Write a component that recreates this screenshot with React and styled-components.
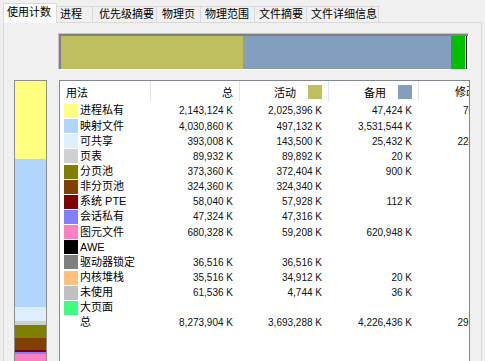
import React from "react"
import styled, { createGlobalStyle } from "styled-components"

const GlobalStyle = createGlobalStyle`
  html, body {
    margin: 0;
    padding: 0;
    background: #f0f0f0;
  }
  body {
    font-family: "Liberation Sans", "Noto Sans CJK SC", sans-serif;
    font-size: 11px;
    color: #000;
  }
`

const Window = styled.div`
  width: 485px;
  height: 361px;
  box-sizing: border-box;
  padding: 3px 3px 0;
  overflow: hidden;
`

const TabStrip = styled.div`
  display: flex;
  align-items: flex-end;
  height: 19px;
  position: relative;
  z-index: 1;
`

const Tab = styled.div`
  box-sizing: border-box;
  width: ${p => p.$w}px;
  height: ${p => (p.$active ? 20 : 16)}px;
  margin-left: ${p => (p.$first ? 0 : -1)}px;
  margin-bottom: ${p => (p.$active ? -1 : 0)}px;
  padding: ${p => (p.$active ? 2 : 1)}px 0 0 ${p => p.$pl}px;
  border: 1px solid #d9d9d9;
  border-bottom: none;
  background: ${p => (p.$active ? "#fbfbfb" : "#f0f0f0")};
  line-height: 13px;
  white-space: nowrap;
  position: relative;
  z-index: ${p => (p.$active ? 2 : 1)};
`

const Panel = styled.div`
  box-sizing: border-box;
  width: 479px;
  height: 400px;
  border: 1px solid #d9d9d9;
  background: #f0f0f0;
  padding-top: 10px;
`

const Sunken = styled.div`
  box-sizing: border-box;
  width: 411px;
  height: 37px;
  margin-left: 54px;
  border: 1px solid;
  border-color: #c4c4c4 #fdfdfd #fdfdfd #c4c4c4;
`

const Track = styled.div`
  display: flex;
  height: 100%;
  box-sizing: border-box;
  border-top: 2px solid #808080;
  border-left: 2px solid #808080;
`

const Fill = styled.div`
  flex: none;
  background: ${p => p.$color};
`

const Marker = styled.div`
  flex: none;
  width: 1px;
  margin-left: 1px;
  background: #000;
`

const Lower = styled.div`
  display: grid;
  grid-template-columns: 33px 411px;
  column-gap: 12px;
  align-items: start;
  margin-top: 10px;
  padding-left: 10px;
`

const ColumnBar = styled.div`
  box-sizing: border-box;
  height: 320px;
  border: 1px solid #8c8c8c;
  display: flex;
  flex-direction: column;
  overflow: hidden;
`

const Slice = styled.div`
  flex: none;
  background: ${p => p.$color};
`

const ListBox = styled.div`
  box-sizing: border-box;
  height: 320px;
  border: 1px solid #828790;
  background: #fff;
  overflow: hidden;
`

// last column is cut by the list edge, only its left part shows
const cols = "91px 89px 89px 90px 50px"

const Header = styled.div`
  display: grid;
  grid-template-columns: ${cols};
  height: 20px;
`

const HeadCell = styled.div`
  box-sizing: border-box;
  display: flex;
  align-items: center;
  justify-content: ${p => (p.$left ? "flex-start" : "flex-end")};
  gap: 12px;
  padding: 2px 6px 0;
  border-right: 1px solid #e5e5e5;
  white-space: nowrap;
`

const CutCell = styled.div`
  overflow: hidden;
  white-space: nowrap;
`

const CutInner = styled.div`
  box-sizing: border-box;
  width: 90px;
  display: flex;
  align-items: center;
  justify-content: flex-end;
  gap: 12px;
  padding: ${p => (p.$head ? "2px 6px 0" : "0 6px 0 0")};
  height: 100%;
  font-size: ${p => (p.$head ? 11 : 10)}px;
  line-height: 15px;
  color: ${p => (p.$head ? "#000" : "#111")};
`

const HeadSwatch = styled.span`
  flex: none;
  width: 14px;
  height: 14px;
  background: ${p => p.$color};
`

const Body = styled.div`
  padding-top: 2.4px;
`

const Row = styled.div`
  display: grid;
  grid-template-columns: ${cols};
  height: 15.15px;
  align-items: center;
`

const Label = styled.div`
  display: flex;
  align-items: center;
  gap: 2px;
  padding-left: 4px;
  line-height: 15px;
  white-space: nowrap;
`

const Swatch = styled.span`
  flex: none;
  width: 14px;
  height: 14px;
  background: ${p => p.$color || "transparent"};
`

const Num = styled.div`
  padding-right: 7px;
  text-align: right;
  font-size: 10px;
  line-height: 15px;
  white-space: nowrap;
  color: #111;
`

const tabs = [
  { name: "使用计数", w: 54, pl: 3 },
  { name: "进程", w: 37, pl: 3 },
  { name: "优先级摘要", w: 65, pl: 6 },
  { name: "物理页", w: 45, pl: 5 },
  { name: "物理范围", w: 55, pl: 4 },
  { name: "文件摘要", w: 53, pl: 4 },
  { name: "文件详细信息", w: 73, pl: 4 },
]

const rows = [
  ["进程私有", "#ffff80", "2,143,124 K", "2,025,396 K", "47,424 K", "70,304 K"],
  ["映射文件", "#b0d6ff", "4,030,860 K", "497,132 K", "3,531,544 K", "2,184 K"],
  ["可共享", "#ddeeff", "393,008 K", "143,500 K", "25,432 K", "224,076 K"],
  ["页表", "#d0d0d0", "89,932 K", "89,892 K", "20 K", "20 K"],
  ["分页池", "#808000", "373,360 K", "372,404 K", "900 K", "56 K"],
  ["非分页池", "#804000", "324,360 K", "324,340 K", "", "20 K"],
  ["系统 PTE", "#800000", "58,040 K", "57,928 K", "112 K", ""],
  ["会话私有", "#8080ff", "47,324 K", "47,316 K", "", "8 K"],
  ["图元文件", "#ff80c0", "680,328 K", "59,208 K", "620,948 K", "172 K"],
  ["AWE", "#000000", "", "", "", ""],
  ["驱动器锁定", "#808080", "36,516 K", "36,516 K", "", ""],
  ["内核堆栈", "#ffc080", "35,516 K", "34,912 K", "20 K", "584 K"],
  ["未使用", "#c0c0c0", "61,536 K", "4,744 K", "36 K", ""],
  ["大页面", "#40ff80", "", "", "", ""],
]

const totals = ["总", null, "8,273,904 K", "3,693,288 K", "4,226,436 K", "297,424 K"]

const kb = s => parseInt((s || "0").replace(/[^0-9]/g, ""), 10) || 0
const grand = kb(totals[2])

const ACTIVE = "#bfbf60"
const STANDBY = "#849fbd"
const MODIFIED = "#00c000"

const TRACK_W = 407
const COLUMN_H = 303

function ListRow({ data }) {
  const [label, color, total, active, standby, modified] = data
  return (
    <Row>
      <Label>
        <Swatch $color={color} />
        {label}
      </Label>
      <Num>{total}</Num>
      <Num>{active}</Num>
      <Num>{standby}</Num>
      <CutCell>
        <CutInner>{modified}</CutInner>
      </CutCell>
    </Row>
  )
}

export default function App() {
  const segments = [
    [ACTIVE, kb(totals[3])],
    [STANDBY, kb(totals[4])],
    [MODIFIED, kb(totals[5])],
  ]

  return (
    <Window>
      <GlobalStyle />
      <TabStrip>
        {tabs.map((t, i) => (
          <Tab key={t.name} $w={t.w} $pl={t.pl} $first={i === 0} $active={i === 0}>
            {t.name}
          </Tab>
        ))}
      </TabStrip>

      <Panel>
        <Sunken>
          <Track>
            {segments.map(([c, v]) => (
              <Fill key={c} $color={c} style={{ width: (v / grand) * TRACK_W }} />
            ))}
            <Marker />
          </Track>
        </Sunken>

        <Lower>
          <ColumnBar>
            {rows.map(r => (
              <Slice key={r[0]} $color={r[1]} style={{ height: (kb(r[2]) / grand) * COLUMN_H }} />
            ))}
          </ColumnBar>

          <ListBox>
            <Header>
              <HeadCell $left>用法</HeadCell>
              <HeadCell>总</HeadCell>
              <HeadCell>
                活动
                <HeadSwatch $color={ACTIVE} />
              </HeadCell>
              <HeadCell>
                备用
                <HeadSwatch $color={STANDBY} />
              </HeadCell>
              <CutCell>
                <CutInner $head>
                  修改
                  <HeadSwatch $color={MODIFIED} />
                </CutInner>
              </CutCell>
            </Header>
            <Body>
              {rows.map(r => (
                <ListRow key={r[0]} data={r} />
              ))}
              <ListRow data={totals} />
            </Body>
          </ListBox>
        </Lower>
      </Panel>
    </Window>
  )
}
